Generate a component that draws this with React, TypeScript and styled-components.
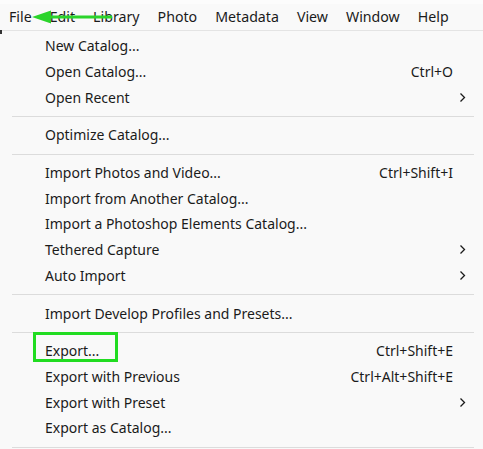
import styled, { createGlobalStyle } from "styled-components"

const GlobalStyle = createGlobalStyle`
  html, body {
    margin: 0;
    padding: 0;
    background: #f9f9f9;
    overflow: hidden;
  }
  body {
    font-family: "Noto Sans", "Open Sans", "Liberation Sans", sans-serif;
    color: #1b1b1b;
  }
`

const Page = styled.div`
  position: relative;
  width: 483px;
  height: 449px;
  overflow: hidden;
  background: #f9f9f9;
`

const TopStrip = styled.div`
  height: 4px;
  background: #fcfcfc;
`

const MenuBar = styled.div`
  position: relative;
  display: flex;
  align-items: center;
  height: 25px;
  padding-bottom: 1px;
  background: #f9f9f9;
`

const MenuTitle = styled.span`
  padding: 0 9px;
  font-size: 14.2px;
  line-height: 25px;
  color: #1b1b1b;
`

const Dropdown = styled.div`
  position: relative;
  width: 486px;
  padding: 2px 0 0;
  background: #f9f9f9;
  border-top: 1px solid #e4e4e4;
  box-sizing: border-box;
`

const Corner = styled.div`
  position: absolute;
  left: 0;
  top: -1px;
  width: 2px;
  height: 4px;
  background: #333;
`

const Row = styled.div`
  display: grid;
  grid-template-columns: 1fr auto 33px;
  align-items: center;
  height: 25.7px;
  padding-left: 45px;
  font-size: 14px;
`

const Label = styled.span`
  white-space: nowrap;
`

const Shortcut = styled.span`
  white-space: nowrap;
  text-align: right;
`

const ArrowSlot = styled.span`
  display: flex;
  align-items: center;
  padding-left: 6px;
`

const Separator = styled.div`
  height: 1px;
  margin: 6px 12px 5px 12px;
  background: #dcdcdc;
`

const Highlight = styled.div`
  position: absolute;
  left: 33px;
  top: 332px;
  width: 85px;
  height: 30px;
  border: 3px solid #21dc21;
  box-sizing: border-box;
`

const Pointer = styled.svg`
  position: absolute;
  left: 32px;
  top: 9px;
`

type Item = { label: string; shortcut?: string; sub?: boolean } | "sep"

const items: Item[] = [
  { label: "New Catalog..." },
  { label: "Open Catalog...", shortcut: "Ctrl+O" },
  { label: "Open Recent", sub: true },
  "sep",
  { label: "Optimize Catalog..." },
  "sep",
  { label: "Import Photos and Video...", shortcut: "Ctrl+Shift+I" },
  { label: "Import from Another Catalog..." },
  { label: "Import a Photoshop Elements Catalog..." },
  { label: "Tethered Capture", sub: true },
  { label: "Auto Import", sub: true },
  "sep",
  { label: "Import Develop Profiles and Presets..." },
  "sep",
  { label: "Export...", shortcut: "Ctrl+Shift+E" },
  { label: "Export with Previous", shortcut: "Ctrl+Alt+Shift+E" },
  { label: "Export with Preset", sub: true },
  { label: "Export as Catalog..." },
  "sep",
]

const titles = ["File", "Edit", "Library", "Photo", "Metadata", "View", "Window", "Help"]

function Chevron() {
  return (
    <svg width="7" height="11" viewBox="0 0 7 11">
      <path d="M1.5 1.5 L5.5 5.5 L1.5 9.5" fill="none" stroke="#1b1b1b" strokeWidth="1.3" />
    </svg>
  )
}

export default function App() {
  return (
    <Page>
      <GlobalStyle />
      <TopStrip />
      <MenuBar>
        {titles.map((t) => (
          <MenuTitle key={t}>{t}</MenuTitle>
        ))}
      </MenuBar>
      <Dropdown>
        <Corner />
        {items.map((it, i) =>
          it === "sep" ? (
            <Separator key={i} />
          ) : (
            <Row key={i}>
              <Label>{it.label}</Label>
              <Shortcut>{it.shortcut}</Shortcut>
              <ArrowSlot>{it.sub && <Chevron />}</ArrowSlot>
            </Row>
          )
        )}
      </Dropdown>
      <Highlight />
      <Pointer width="82" height="16" viewBox="0 0 82 16">
        <path d="M0 8 L19 1.5 L19 6.5 L80 6.5 L80 9.5 L19 9.5 L19 14.5 Z" fill="#2bd42b" />
      </Pointer>
    </Page>
  )
}
